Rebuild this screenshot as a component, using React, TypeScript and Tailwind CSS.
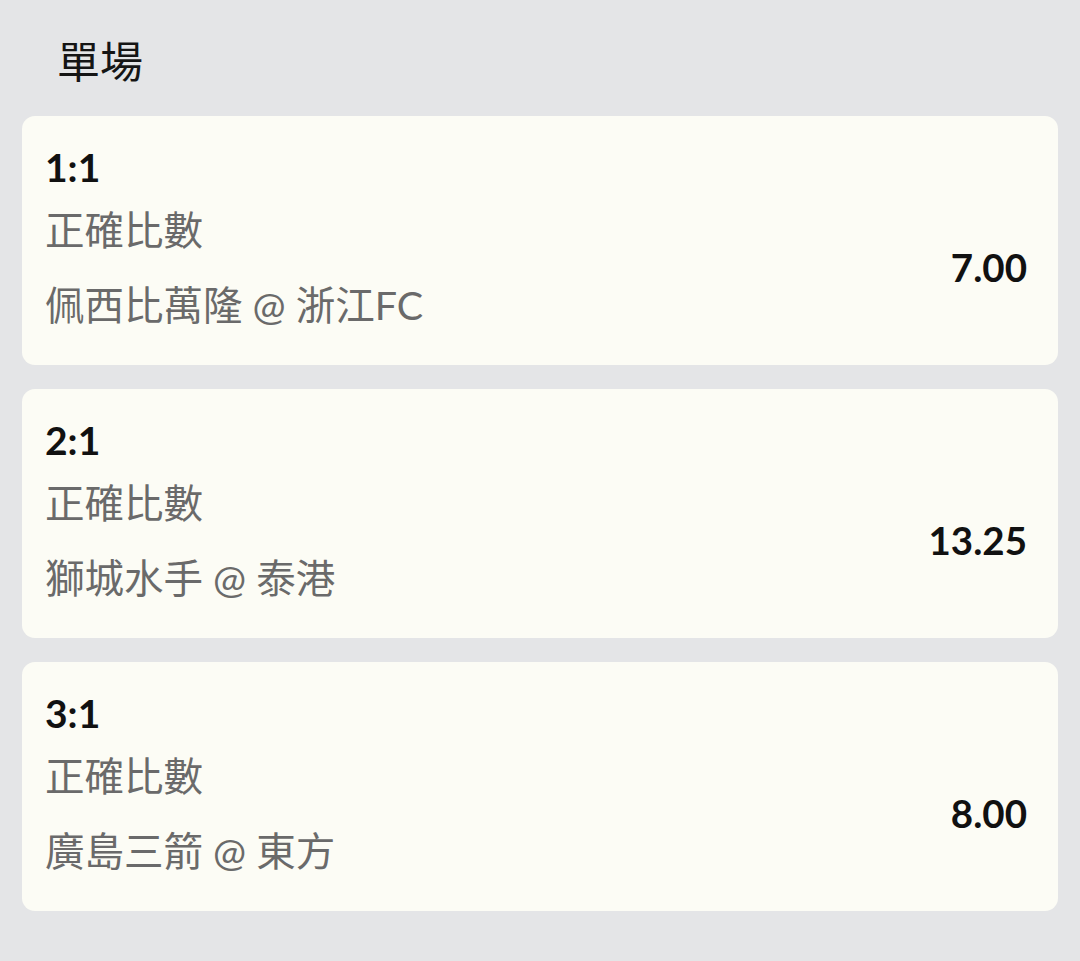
const bets = [
  { score: "1:1", market: "正確比數", match: "佩西比萬隆 @ 浙江FC", odds: "7.00" },
  { score: "2:1", market: "正確比數", match: "獅城水手 @ 泰港", odds: "13.25" },
  { score: "3:1", market: "正確比數", match: "廣島三箭 @ 東方", odds: "8.00" },
];

function BetCard({ score, market, match, odds }: (typeof bets)[number]) {
  return (
    <div className="rounded-[13px] bg-[#fcfcf5] pl-[23px] pr-[31px] pt-[26px] pb-[32px]">
      <div className="text-[39px] leading-[50px] font-bold text-[#111]">{score}</div>
      <div className="flex items-center">
        <div className="flex-1">
          <div className="mt-[10px] text-[39.5px] leading-[56px] text-[#6a6a6a]">{market}</div>
          <div className="mt-[19px] text-[39.5px] leading-[56px] text-[#6a6a6a]">{match}</div>
        </div>
        <div className="mt-[11px] text-[38.5px] font-bold text-[#111]">{odds}</div>
      </div>
    </div>
  );
}

export default function App() {
  return (
    <div
      className="min-h-[961px] bg-[#e4e5e7] px-[22px]"
      style={{ fontFamily: 'Lato, "Noto Sans CJK TC", sans-serif' }}
    >
      {/* Header */}
      <div className="flex h-[116px] items-center pt-[8px] pl-[35px] text-[43px] text-[#151515]">
        單場
      </div>

      <div className="flex flex-col gap-[24px]">
        {bets.map((b) => (
          <BetCard key={b.score} {...b} />
        ))}
      </div>
    </div>
  );
}
